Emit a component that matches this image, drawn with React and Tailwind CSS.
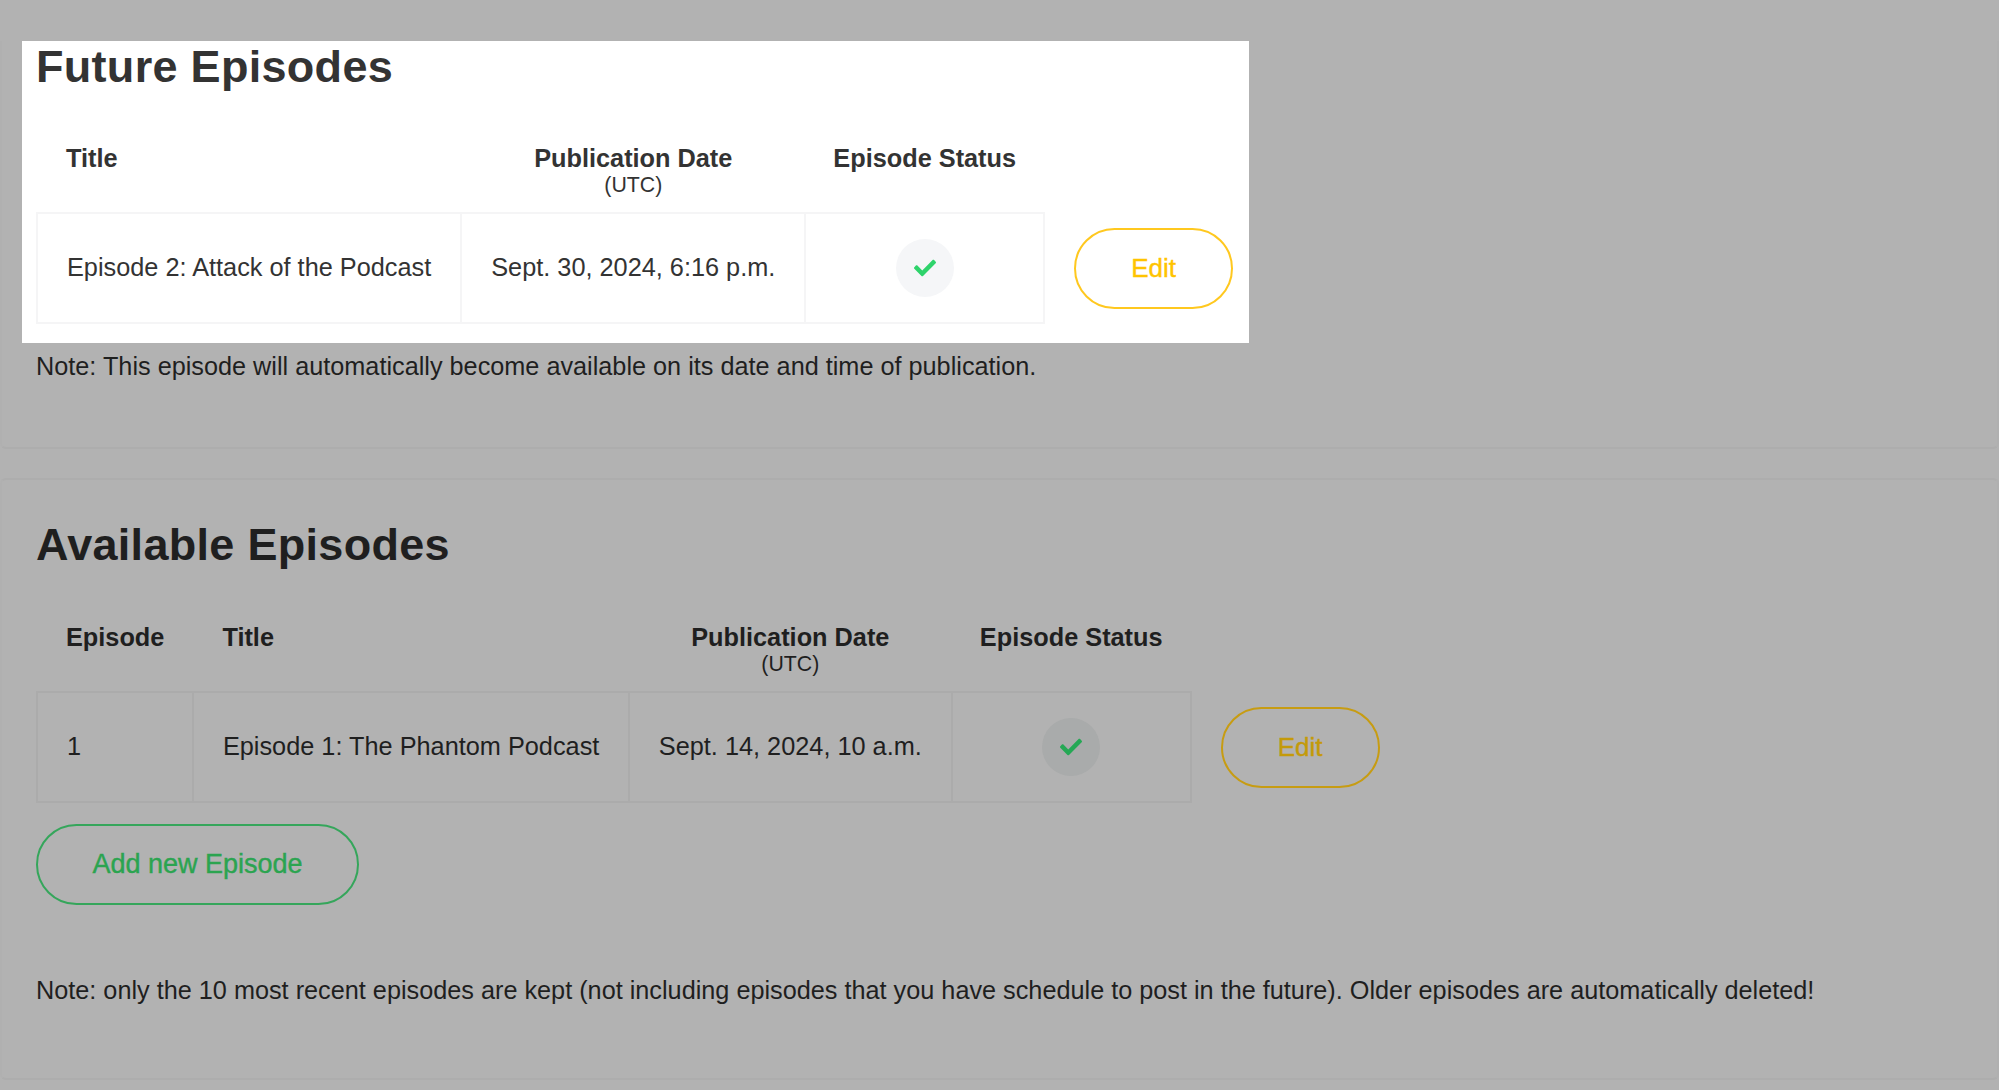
import React from "react";
import { FaCheck } from "react-icons/fa";

function EpisodeTable({ episode, title, date, dim }) {
  const border = dim ? "border-[#ababab]" : "border-[#f5f5f6]";
  const th = "pb-[16px] pt-[49px] align-top font-bold text-[25.3px] leading-[32px] whitespace-nowrap";
  const td = `border-2 ${border} h-[110px] text-[25.3px] whitespace-nowrap`;
  return (
    <table className="border-collapse text-left">
      <thead>
        <tr>
          {episode && <th className={`${th} px-[29px] text-left`}>Episode</th>}
          <th className={`${th} px-[29px] text-left`}>Title</th>
          <th className={`${th} px-[29px] text-center`}>
            Publication Date
            <div className="font-normal text-[21.3px] leading-[22px]">(UTC)</div>
          </th>
          <th className={`${th} px-[28px] text-center`}>Episode Status</th>
          <th />
        </tr>
      </thead>
      <tbody>
        <tr>
          {episode && <td className={`${td} px-[29px]`}>{episode}</td>}
          <td className={`${td} ${dim ? "px-[28.5px]" : "px-[29px]"}`}>{title}</td>
          <td className={`${td} px-[29px]`}>{date}</td>
          <td className={`${td} px-[28px]`}>
            <div className={`mx-auto flex h-[58px] w-[58px] items-center justify-center rounded-full ${dim ? "bg-[#a9abab]" : "bg-[#f5f6f8]"}`}>
              <FaCheck className={`h-[22px] w-[22px] ${dim ? "text-[#25a855]" : "text-[#2ed36b]"}`} />
            </div>
          </td>
          <td className="pl-[29px]">
            <button className={`flex h-[81px] w-[159px] items-center justify-center rounded-[41px] border-[2.5px] text-[26px] [-webkit-text-stroke:0.4px] ${dim ? "border-[#c79c12] text-[#c49a0a]" : "border-[#ffc81f] text-[#ffc400]"}`}>
              Edit
            </button>
          </td>
        </tr>
      </tbody>
    </table>
  );
}

export default function App() {
  return (
    <div className="h-[1090px] w-[1999px] overflow-hidden bg-[#b2b2b2] pt-[41px] font-['Liberation_Sans',Arial,sans-serif] text-[#1f1f1f]">
      <section className="h-[408px] rounded-b-[6px] border-2 border-t-0 border-[#adadad] border-x-[#b0b0b0]">
        <div className="ml-[20px] h-[302px] w-[1227px] bg-white pl-[14px] text-[#333]">
          <h2 className="text-[45px] font-bold leading-[52px] tracking-[0.3px]">Future Episodes</h2>
          <EpisodeTable title="Episode 2: Attack of the Podcast" date="Sept. 30, 2024, 6:16 p.m." />
        </div>
        <p className="ml-[34px] mt-[5px] text-[25.26px] leading-[36px]">Note: This episode will automatically become available on its date and time of publication.</p>
      </section>
      <section className="mt-[29px] h-[602px] rounded-[6px] border-2 border-[#adadad] border-x-[#b0b0b0] pl-[34px]">
        <h2 className="mt-[38px] text-[45px] font-bold leading-[54px] tracking-[0.3px]">Available Episodes</h2>
        <EpisodeTable episode="1" title="Episode 1: The Phantom Podcast" date="Sept. 14, 2024, 10 a.m." dim />
        <button className="mt-[21px] flex h-[81px] w-[323px] items-center justify-center rounded-[41px] border-[2.5px] border-[#35a65b] text-[27px] [-webkit-text-stroke:0.4px] text-[#2ba450]">
          Add new Episode
        </button>
        <p className="mt-[67px] text-[25.26px] leading-[36px] whitespace-nowrap">Note: only the 10 most recent episodes are kept (not including episodes that you have schedule to post in the future). Older episodes are automatically deleted!</p>
      </section>
    </div>
  );
}
